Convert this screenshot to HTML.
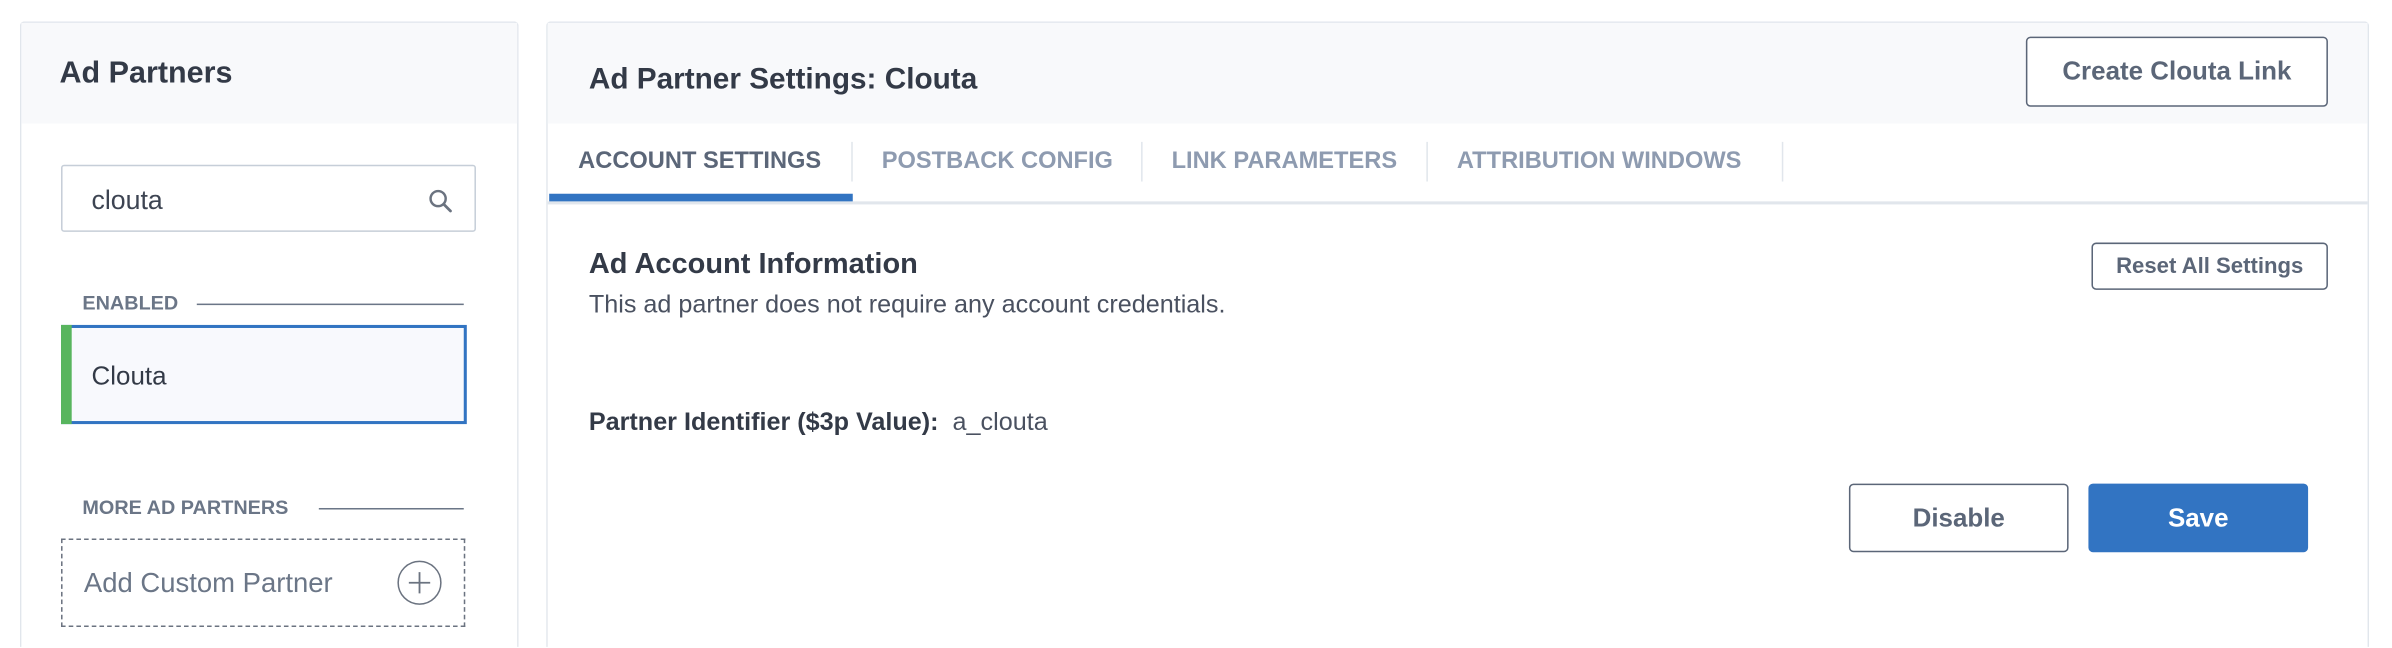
<!DOCTYPE html>
<html><head><meta charset="utf-8"><style>
html,body{margin:0;padding:0;background:#fff;width:2392px;height:648px;overflow:hidden}
#w{position:absolute;left:0;top:0;width:1568px;height:424px;overflow:hidden;transform:scale(1.52551);transform-origin:0 0;font-family:"Liberation Sans",sans-serif;color:#333a47}
.abs{position:absolute}
.panel{position:absolute;border:1px solid #e1e6ec;border-bottom:none;border-radius:3px 3px 0 0;background:#fff;box-sizing:border-box}
.hdr{position:absolute;left:0;top:0;right:0;background:#f8f9fb}
.btn{position:absolute;box-sizing:border-box;border:1.5px solid #5b6678;border-radius:3px;background:#fff;color:#5b6678;font-weight:bold;display:flex;align-items:center;justify-content:center}
.tab{position:absolute;top:82px;font-size:15.5px;font-weight:bold;color:#8e9bb0;letter-spacing:0}
.div{position:absolute;top:78px;width:1px;height:26px;background:#e1e6ec}
.lbl{position:absolute;font-size:13px;font-weight:bold;color:#6b7687}
.ln{position:absolute;height:1px;background:#6b7687}
</style></head><body><div id="w">
<div class="panel" style="left:13px;top:14px;width:327px;height:411px">
 <div class="hdr" style="height:66px"></div>
 <div class="abs" style="left:25px;top:22px;font-size:20px;font-weight:bold;color:#333a47">Ad Partners</div>
 <div class="abs" style="left:26px;top:93px;width:272px;height:44px;box-sizing:border-box;border:1px solid #c6ced8;border-radius:2px"></div>
 <div class="abs" style="left:46px;top:106px;font-size:17.5px;color:#3d4452">clouta</div>
 <svg class="abs" style="left:266px;top:108px" width="18" height="18" viewBox="0 0 20 20"><circle cx="8" cy="8" r="5.5" fill="none" stroke="#6b7380" stroke-width="1.8"/><path d="M12 12 L17 17" stroke="#6b7380" stroke-width="2" stroke-linecap="round"/></svg>
 <div class="lbl" style="left:40px;top:176px">ENABLED</div>
 <div class="ln" style="left:115px;top:184px;width:175px"></div>
 <div class="abs" style="left:26px;top:198px;width:266px;height:65px;box-sizing:border-box;border:2px solid #3274c2;background:#f8f9fd"></div>
 <div class="abs" style="left:26px;top:198px;width:7px;height:65px;background:#58b55e"></div>
 <div class="abs" style="left:46px;top:222px;font-size:17px;color:#333a47">Clouta</div>
 <div class="lbl" style="left:40px;top:310px">MORE AD PARTNERS</div>
 <div class="ln" style="left:195px;top:318px;width:95px"></div>
 <div class="abs" style="left:26px;top:338px;width:265px;height:58px;box-sizing:border-box;border:1.5px dashed #6b7380"></div>
 <div class="abs" style="left:41px;top:357px;font-size:18px;color:#6b7687">Add Custom Partner</div>
 <svg class="abs" style="left:246px;top:352px" width="30" height="30" viewBox="0 0 30 30"><circle cx="15" cy="15" r="14" fill="none" stroke="#6b7380" stroke-width="1"/><path d="M15 8V22M8 15H22" stroke="#6b7380" stroke-width="1.2"/></svg>
</div>
<div class="panel" style="left:358px;top:14px;width:1195px;height:411px">
 <div class="hdr" style="height:66px"></div>
 <div class="abs" style="left:27px;top:26px;font-size:19.5px;font-weight:bold;color:#333a47">Ad Partner Settings: Clouta</div>
 <div class="btn" style="left:969px;top:9px;width:198px;height:46px;font-size:17px">Create Clouta Link</div>
 <div class="abs" style="left:0;top:117px;right:0;height:1.5px;background:#e1e6ec"></div>
 <div class="abs" style="left:1px;top:112px;width:199px;height:5px;background:#3274c2"></div>
 <div class="tab" style="left:20px;color:#5b6678">ACCOUNT SETTINGS</div>
 <div class="div" style="left:199px"></div>
 <div class="tab" style="left:219px">POSTBACK CONFIG</div>
 <div class="div" style="left:389px"></div>
 <div class="tab" style="left:409px">LINK PARAMETERS</div>
 <div class="div" style="left:576px"></div>
 <div class="tab" style="left:596px">ATTRIBUTION WINDOWS</div>
 <div class="div" style="left:809px"></div>
 <div class="abs" style="left:27px;top:148px;font-size:19px;font-weight:bold;color:#333a47">Ad Account Information</div>
 <div class="abs" style="left:27px;top:176px;font-size:16.5px;color:#4a5160">This ad partner does not require any account credentials.</div>
 <div class="btn" style="left:1012px;top:144px;width:155px;height:31px;font-size:14.5px">Reset All Settings</div>
 <div class="abs" style="left:27px;top:253px;font-size:16.5px;color:#333a47"><b>Partner Identifier ($3p Value):</b>&nbsp; <span style="color:#4a5160">a_clouta</span></div>
 <div class="btn" style="left:853px;top:302px;width:144px;height:45px;font-size:17px">Disable</div>
 <div class="btn" style="left:1010px;top:302px;width:144px;height:45px;font-size:17px;background:#3274c2;border-color:#3274c2;color:#fff">Save</div>
</div>
</div></body></html>
